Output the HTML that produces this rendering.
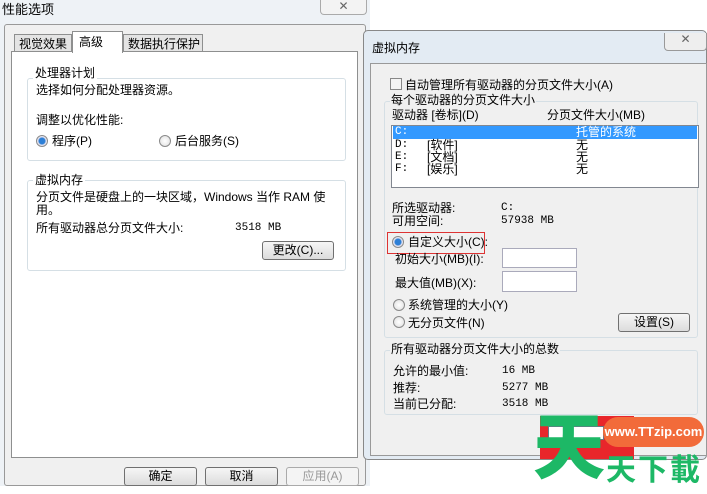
<!DOCTYPE html>
<html><head><meta charset="utf-8"><style>
*{margin:0;padding:0;box-sizing:border-box}
body{width:707px;height:486px;overflow:hidden;background:#fff;position:relative;font:12px "Liberation Sans","Noto Sans CJK SC",sans-serif;color:#000}
.a{position:absolute;white-space:nowrap;line-height:13px}
.b{position:absolute;border:1px solid #707070;border-radius:3px;background:linear-gradient(#f6f6f6,#dcdcdc);text-align:center;line-height:16px}
.g{position:absolute;border:1px solid #d5dfe5;border-radius:3px}
.r{position:absolute;width:12px;height:12px;border-radius:50%;border:1px solid #8a8a8a;background:radial-gradient(#fff,#ddd)}
.r.on{background:radial-gradient(#2d7fd6 0 3px,#dde 4px,#fff 6px)}
.m{font-family:"Liberation Mono","Noto Sans CJK SC",monospace;font-size:11px}
</style></head><body>
<div class="a" style="left:0;top:0;width:370px;height:486px;background:#eef2f6"></div>
<div class="a" style="left:2px;top:3px;font-size:13px">性能选项</div>
<div class="a" style="left:320px;top:0;width:47px;height:15px;border:1px solid #aaa;border-top:none;border-radius:0 0 4px 4px;background:#f3f3f3;text-align:center;color:#666;line-height:12px">✕</div>
<div class="a" style="left:4px;top:24px;width:362px;height:462px;background:#f0f0f0;border:1px solid #999;border-radius:3px"></div>
<div class="a" style="left:11px;top:51px;width:347px;height:407px;background:#fff;border:1px solid #8e8f8f"></div>
<div class="a" style="left:14px;top:34px;width:58px;height:18px;border:1px solid #8e8f8f;background:#e4e4e4;padding:3px 4px">视觉效果</div>
<div class="a" style="left:123px;top:34px;width:80px;height:18px;border:1px solid #8e8f8f;background:#e4e4e4;padding:3px 4px">数据执行保护</div>
<div class="a" style="left:72px;top:31px;width:51px;height:22px;border:1px solid #8e8f8f;border-bottom:none;background:#fff;padding:4px 6px">高级</div>
<div class="g" style="left:27px;top:78px;width:319px;height:83px"></div>
<div class="a" style="left:33px;top:67px;background:#fff;padding:0 2px">处理器计划</div>
<div class="a" style="left:36px;top:84px">选择如何分配处理器资源。</div>
<div class="a" style="left:36px;top:114px">调整以优化性能:</div>
<div class="r on" style="left:36px;top:135px"></div><div class="a" style="left:52px;top:135px">程序(P)</div>
<div class="r" style="left:159px;top:135px"></div><div class="a" style="left:175px;top:135px">后台服务(S)</div>
<div class="g" style="left:27px;top:180px;width:319px;height:91px"></div>
<div class="a" style="left:33px;top:174px;background:#fff;padding:0 2px">虚拟内存</div>
<div class="a" style="left:36px;top:191px">分页文件是硬盘上的一块区域，Windows 当作 RAM 使</div>
<div class="a" style="left:36px;top:204px">用。</div>
<div class="a" style="left:36px;top:222px">所有驱动器总分页文件大小:</div>
<div class="a m" style="left:235px;top:222px">3518 MB</div>
<div class="b" style="left:262px;top:241px;width:72px;height:19px">更改(C)...</div>
<div class="b" style="left:124px;top:467px;width:73px;height:19px">确定</div>
<div class="b" style="left:205px;top:467px;width:73px;height:19px">取消</div>
<div class="b" style="left:286px;top:467px;width:73px;height:19px;color:#999;border-color:#aaa;background:#f4f4f4">应用(A)</div>
<div class="a" style="left:363px;top:30px;width:344px;height:430px;background:#e3ebf3;border:1px solid #888;border-radius:5px"></div>
<div class="a" style="left:372px;top:42px;font-size:12px">虚拟内存</div>
<div class="a" style="left:664px;top:33px;width:43px;height:18px;border:1px solid #999;border-top:none;border-radius:0 0 4px 4px;background:#eee;text-align:center;color:#666">✕</div>
<div class="a" style="left:370px;top:63px;width:337px;height:393px;background:#f0f0f0;border:1px solid #999"></div>
<div class="a" style="left:390px;top:78px;width:12px;height:12px;border:1px solid #888;background:#f4f4f4"></div>
<div class="a" style="left:405px;top:79px">自动管理所有驱动器的分页文件大小(A)</div>
<div class="g" style="left:384px;top:101px;width:314px;height:237px"></div>
<div class="a" style="left:390px;top:94px;background:#f0f0f0;padding:0 1px">每个驱动器的分页文件大小</div>
<div class="a" style="left:392px;top:109px">驱动器 [卷标](D)</div>
<div class="a" style="left:547px;top:109px">分页文件大小(MB)</div>
<div class="a" style="left:391px;top:125px;width:308px;height:63px;background:#fff;border:1px solid #828790"></div>
<div class="a" style="left:393px;top:126px;width:304px;height:13px;background:#3399ff"></div>
<div class="a m" style="left:395px;top:126px;color:#fff">C:</div><div class="a" style="left:576px;top:126px;color:#fff">托管的系统</div>
<div class="a m" style="left:395px;top:139px">D:</div><div class="a" style="left:427px;top:139px">[软件]</div><div class="a" style="left:576px;top:139px">无</div>
<div class="a m" style="left:395px;top:151px">E:</div><div class="a" style="left:427px;top:151px">[文档]</div><div class="a" style="left:576px;top:151px">无</div>
<div class="a m" style="left:395px;top:163px">F:</div><div class="a" style="left:427px;top:163px">[娱乐]</div><div class="a" style="left:576px;top:163px">无</div>
<div class="a" style="left:392px;top:202px">所选驱动器:</div><div class="a m" style="left:501px;top:202px">C:</div>
<div class="a" style="left:392px;top:215px">可用空间:</div><div class="a m" style="left:501px;top:215px">57938 MB</div>
<div class="a" style="left:387px;top:232px;width:98px;height:22px;border:1px solid #d33"></div>
<div class="r on" style="left:392px;top:236px"></div><div class="a" style="left:408px;top:236px">自定义大小(C):</div>
<div class="a" style="left:395px;top:253px">初始大小(MB)(I):</div>
<div class="a" style="left:502px;top:248px;width:75px;height:20px;background:#fff;border:1px solid #aab"></div>
<div class="a" style="left:395px;top:277px">最大值(MB)(X):</div>
<div class="a" style="left:502px;top:271px;width:75px;height:21px;background:#fff;border:1px solid #aab"></div>
<div class="r" style="left:393px;top:299px"></div><div class="a" style="left:408px;top:299px">系统管理的大小(Y)</div>
<div class="r" style="left:393px;top:316px"></div><div class="a" style="left:408px;top:317px">无分页文件(N)</div>
<div class="b" style="left:618px;top:313px;width:72px;height:19px">设置(S)</div>
<div class="g" style="left:384px;top:350px;width:314px;height:65px"></div>
<div class="a" style="left:390px;top:343px;background:#f0f0f0;padding:0 1px">所有驱动器分页文件大小的总数</div>
<div class="a" style="left:393px;top:365px">允许的最小值:</div><div class="a m" style="left:502px;top:365px">16 MB</div>
<div class="a" style="left:393px;top:382px">推荐:</div><div class="a m" style="left:502px;top:382px">5277 MB</div>
<div class="a" style="left:393px;top:398px">当前已分配:</div><div class="a m" style="left:502px;top:398px">3518 MB</div>
<div class="a" style="left:540px;top:416px;width:94px;height:43px;background:#e8262b"></div>
<div class="a" style="left:548px;top:426px;width:56px;height:14px;background:#fff;border:1px solid #678"></div>
<div class="a" style="left:533px;top:404px;font:900 72px/76px 'Noto Sans CJK SC',sans-serif;color:#1db866">天</div>
<div class="a" style="left:603px;top:417px;width:101px;height:30px;border-radius:15px;background:#f26b3a;color:#fff;font:bold 13px/30px 'Liberation Sans',sans-serif;text-align:center">www.TTzip.com</div>
<div class="a" style="left:606px;top:451px;font:bold 30px/32px 'Noto Sans CJK SC',sans-serif;color:#1db866;letter-spacing:2px">天下載</div>
</body></html>
